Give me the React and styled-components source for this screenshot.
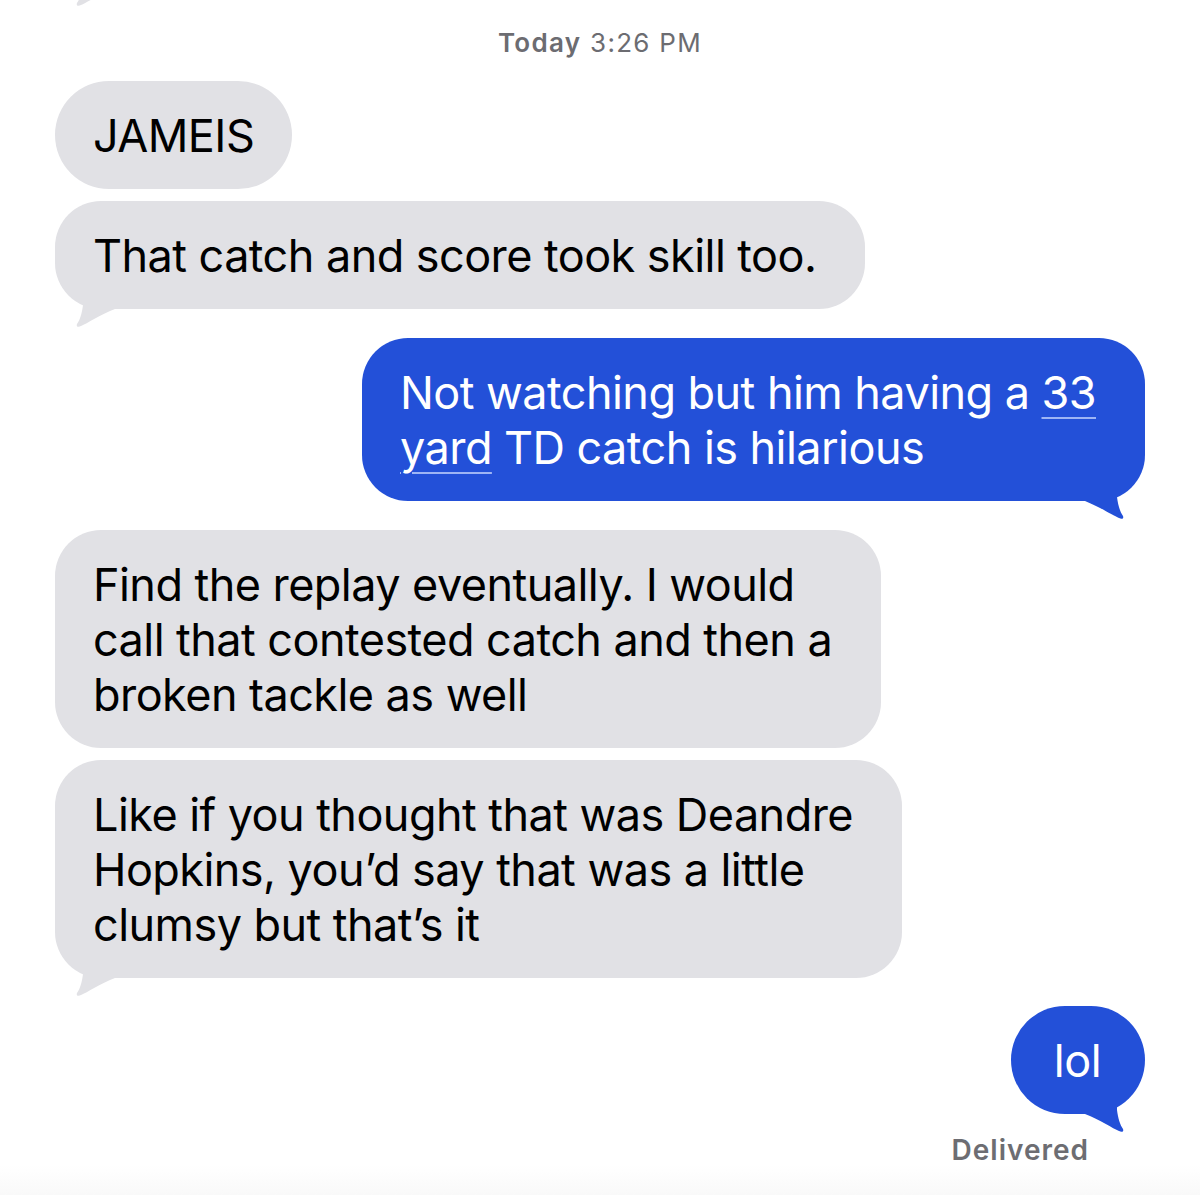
import styled, { createGlobalStyle } from 'styled-components'

const GlobalStyle = createGlobalStyle`
  html, body {
    margin: 0;
    padding: 0;
    background: #ffffff;
  }
  body {
    font-family: Inter, 'Noto Sans', sans-serif;
    -webkit-font-smoothing: antialiased;
  }
`

const GRAY = '#e1e1e5'
const BLUE = '#2350d8'

const Page = styled.div`
  width: 1200px;
  height: 1195px;
  overflow: hidden;
  box-sizing: border-box;
  padding: 0 55px;
  display: flex;
  flex-direction: column;
  background: linear-gradient(to bottom, #ffffff 1165px, #f9f9f9 1195px);
`

const PrevTailClip = styled.div`
  height: 6px;
  overflow: hidden;
  flex-shrink: 0;
`

const PrevTailSvg = styled.svg`
  display: block;
  margin-top: -34px;
`

const Timestamp = styled.div`
  margin-top: 22px;
  text-align: center;
  font-size: 26px;
  line-height: 30px;
  letter-spacing: 1.3px;
  color: #6c6c71;
`

const TimeDay = styled.span`
  font-weight: 600;
`

const Bubble = styled.div`
  position: relative;
  align-self: ${(p) => (p.$out ? 'flex-end' : 'flex-start')};
  margin-top: ${(p) => p.$gap}px;
  padding: 27px ${(p) => p.$pr || 49}px 26px ${(p) => p.$pl || 38}px;
  border-radius: 46px;
  background: ${(p) => (p.$out ? BLUE : GRAY)};
  color: ${(p) => (p.$out ? '#ffffff' : '#000000')};
  font-size: 45px;
  line-height: 55px;
  letter-spacing: -0.55px;
  white-space: nowrap;
`

const Pill = styled(Bubble)`
  border-radius: 56px;
`

const TailSvg = styled.svg`
  position: absolute;
  bottom: -18px;
  ${(p) => (p.$out ? 'right: 0; transform: scaleX(-1);' : 'left: 0;')}
  display: block;
`

const Link = styled.span`
  text-decoration: underline;
  text-decoration-color: rgba(200, 215, 255, 0.75);
  text-decoration-thickness: 2px;
  text-underline-offset: 8px;
`

const Status = styled.div`
  align-self: flex-end;
  margin-top: 19px;
  margin-right: 56px;
  font-size: 28px;
  line-height: 34px;
  font-weight: 600;
  letter-spacing: 1px;
  color: #6d6d72;
`

const TAIL_PATH =
  'M 28 0 L 28 18 C 27 26 25 33 22 37 C 21 39.5 23 40.5 26 39 C 32 36.5 45 28 60 22 L 60 0 Z'

const Tail = ({ out, color }) => (
  <TailSvg $out={out} width='60' height='40' viewBox='0 0 60 40'>
    <path d={TAIL_PATH} fill={color} />
  </TailSvg>
)

const App = () => {
  return (
    <>
      <GlobalStyle />
      <Page>
        <PrevTailClip>
          <PrevTailSvg width='60' height='40' viewBox='0 0 60 40'>
            <path d={TAIL_PATH} fill={GRAY} />
          </PrevTailSvg>
        </PrevTailClip>

        <Timestamp>
          <TimeDay>Today</TimeDay> 3:26 PM
        </Timestamp>

        <Pill $gap={23} $pr={38}>JAMEIS</Pill>
        <Bubble $gap={12}>
          That catch and score took skill too.
          <Tail color={GRAY} />
        </Bubble>

        <Bubble $out $gap={29}>
          Not watching but him having a <Link>33</Link>
          <br />
          <Link>yard</Link> TD catch is hilarious
          <Tail out color={BLUE} />
        </Bubble>

        <Bubble $gap={29}>
          Find the replay eventually. I would
          <br />
          call that contested catch and then a
          <br />
          broken tackle as well
        </Bubble>
        <Bubble $gap={12}>
          Like if you thought that was Deandre
          <br />
          Hopkins, you’d say that was a little
          <br />
          clumsy but that’s it
          <Tail color={GRAY} />
        </Bubble>

        <Pill $out $gap={28} $pl={43} $pr={44}>
          lol
          <Tail out color={BLUE} />
        </Pill>
        <Status>Delivered</Status>
      </Page>
    </>
  )
}

export default App
